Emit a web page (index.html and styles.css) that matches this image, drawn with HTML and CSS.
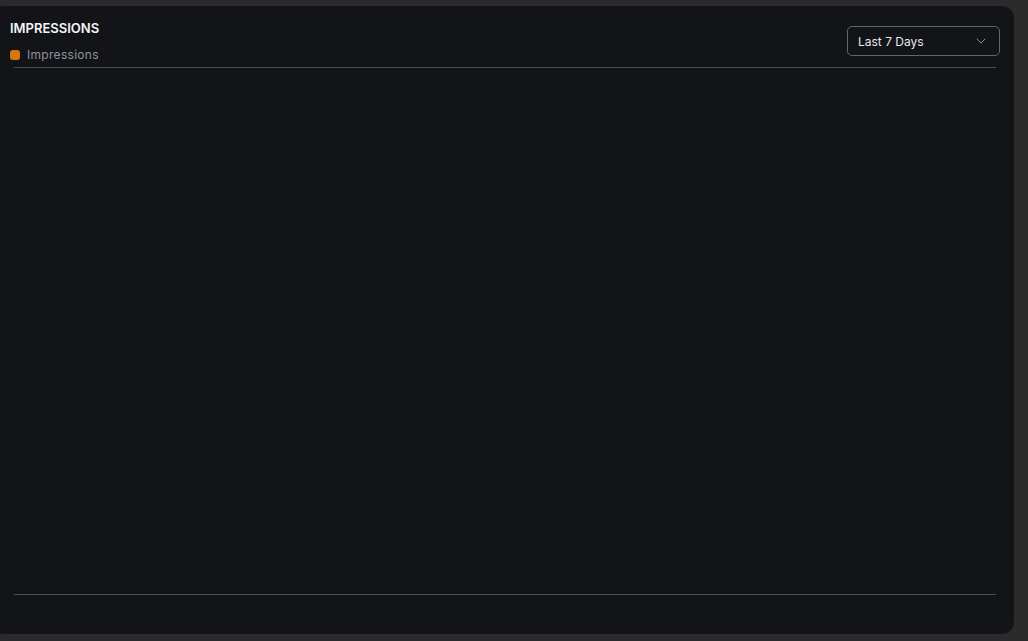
FILE: index.html
```html
<!DOCTYPE html>
<html lang="en">
<head>
<meta charset="utf-8">
<title>Impressions</title>
<link rel="stylesheet" href="styles.css">
</head>
<body>
<section class="card">
  <header class="card-head">
    <div class="head-left">
      <h2 class="title">IMPRESSIONS</h2>
      <div class="legend">
        <span class="swatch"></span>
        <span class="legend-label">Impressions</span>
      </div>
    </div>
    <button class="select" type="button">
      <span>Last 7 Days</span>
      <svg class="chev" width="10" height="6" viewBox="0 0 10 6" fill="none"><path d="M1 1l4 4 4-4" stroke="#8b8f99" stroke-width="1" stroke-linecap="round" stroke-linejoin="round"/></svg>
    </button>
  </header>
  <div class="chart">
    <div class="axis-line"></div>
    <div class="plot"></div>
    <div class="axis-line"></div>
  </div>
</section>
</body>
</html>
```
FILE: styles.css
```css
html, body {
  margin: 0;
  padding: 0;
  background: #2b2b2c;
  height: 100%;
  overflow: hidden;
}
body {
  font-family: "Inter", "Poppins", "Noto Sans", sans-serif;
}
.card {
  box-sizing: border-box;
  margin: 6px 14px 0 -8px;
  height: 628px;
  background: #131418;
  border-radius: 12px;
  padding: 0 18px 0 22px;
  display: flex;
  flex-direction: column;
}
.card-head {
  display: flex;
  justify-content: space-between;
  align-items: flex-start;
  margin-left: -4px;
  margin-right: -4px;
}
.head-left {
  padding-top: 14px;
}
.title {
  margin: 0;
  font-size: 13px;
  font-weight: 600;
  color: #f3f4f6;
  line-height: 16px;
  letter-spacing: 0;
}
.legend {
  display: flex;
  align-items: center;
  gap: 7px;
  margin-top: 12px;
}
.swatch {
  width: 10px;
  height: 10px;
  border-radius: 3px;
  background: #d97706;
}
.legend-label {
  font-size: 12px;
  color: #8e929c;
  line-height: 14px;
  letter-spacing: 0.3px;
}
.select {
  margin-top: 20px;
  box-sizing: border-box;
  width: 153px;
  height: 30px;
  border: 1px solid #62656e;
  border-radius: 5px;
  background: transparent;
  color: #e5e7eb;
  font-family: inherit;
  font-size: 12px;
  padding: 0 13px 0 10px;
  display: flex;
  align-items: center;
  justify-content: space-between;
}
.chart {
  flex: 1;
  display: flex;
  flex-direction: column;
  margin-top: 5px;
  padding-bottom: 39px;
}
.axis-line {
  height: 1px;
  background: #4c4d53;
}
.plot {
  flex: 1;
}
```
